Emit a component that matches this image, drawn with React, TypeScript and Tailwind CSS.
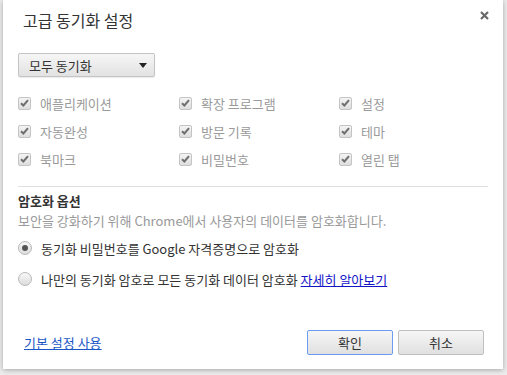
import React from "react";

const font = { fontFamily: '"Noto Sans CJK KR", "Noto Sans", sans-serif' };

function Check() {
  return (
    <span className="w-[13px] h-[13px] rounded-[2px] border border-[#c4c4c4] bg-gradient-to-b from-[#f4f4f4] to-[#dedede] flex items-center justify-center shrink-0">
      <svg width="9" height="8" viewBox="0 0 9 8">
        <path d="M1 4.2 L3.4 6.5 L8 1.2" fill="none" stroke="#6e6e6e" strokeWidth="2" />
      </svg>
    </span>
  );
}

function CheckItem({ label }: { label: string }) {
  return (
    <div className="flex items-center gap-[9px] h-[28px]">
      <Check />
      <span className="text-[13px] text-[#9a9a9a] leading-none">{label}</span>
    </div>
  );
}

function Radio({ checked }: { checked?: boolean }) {
  return (
    <span className="w-[14px] h-[14px] rounded-full border border-[#b8b8b8] bg-gradient-to-b from-[#f8f8f8] to-[#dcdcdc] flex items-center justify-center shrink-0">
      {checked && <span className="w-[6px] h-[6px] rounded-full bg-[#555]" />}
    </span>
  );
}

export default function App() {
  return (
    <div className="w-[507px] h-[375px] bg-[#ececec] overflow-hidden" style={font}>
      <div className="ml-[3px] w-[500px] h-[369px] bg-white shadow-[0_1px_5px_rgba(0,0,0,0.3)] relative flex flex-col px-[15px]">
        <button className="absolute right-[14px] top-[10px] w-[10px] h-[10px] flex items-center justify-center">
          <svg width="9" height="9" viewBox="0 0 9 9">
            <path d="M1 1 L8 8 M8 1 L1 8" stroke="#6a6a6a" strokeWidth="2.2" />
          </svg>
        </button>
        <div className="pt-[9px] pl-[5px] text-[16px] text-[#333] leading-[22px]">고급 동기화 설정</div>
        <div className="mt-[22px] w-[137px] h-[24px] border border-[#c4c4c4] rounded-[2px] bg-gradient-to-b from-[#f6f6f6] to-[#e2e2e2] shadow-[0_1px_1px_rgba(0,0,0,0.08)] flex items-center justify-between pl-[10px] pr-[7px]">
          <span className="text-[13px] text-[#333] leading-none">모두 동기화</span>
          <svg width="8" height="5" viewBox="0 0 8 5">
            <path d="M0 0 H8 L4 5 Z" fill="#222" />
          </svg>
        </div>
        <div className="mt-[12px] grid grid-cols-[161px_160px_1fr]">
          <CheckItem label="애플리케이션" />
          <CheckItem label="확장 프로그램" />
          <CheckItem label="설정" />
          <CheckItem label="자동완성" />
          <CheckItem label="방문 기록" />
          <CheckItem label="테마" />
          <CheckItem label="북마크" />
          <CheckItem label="비밀번호" />
          <CheckItem label="열린 탭" />
        </div>
        <div className="mt-[13px] h-px bg-[#e0e0e0] w-[470px]" />
        <div className="mt-[5px] text-[13px] font-bold text-[#333] leading-[18px]">암호화 옵션</div>
        <div className="mt-[2px] text-[13px] text-[#999] leading-[18px]">보안을 강화하기 위해 Chrome에서 사용자의 데이터를 암호화합니다.</div>
        <div className="mt-[9px] flex items-center gap-[9px] h-[18px]">
          <Radio checked />
          <span className="text-[13px] text-[#333] leading-none">동기화 비밀번호를 Google 자격증명으로 암호화</span>
        </div>
        <div className="mt-[13px] flex items-center gap-[9px] h-[18px]">
          <Radio />
          <span className="text-[13px] text-[#333] leading-none">
            나만의 동기화 암호로 모든 동기화 데이터 암호화{" "}
            <a className="text-[#1515c8] underline">자세히 알아보기</a>
          </span>
        </div>
        <div className="mt-auto mb-[14px] flex items-center justify-between">
          <a className="ml-[6px] text-[13px] text-[#1a56c7] underline leading-none">기본 설정 사용</a>
          <div className="flex gap-[5px] mr-[4px]">
            <button className="w-[86px] h-[25px] border border-[#6b9cf0] rounded-[2px] bg-gradient-to-b from-[#f6f6f6] to-[#e0e0e0] text-[13px] text-[#333]">확인</button>
            <button className="w-[86px] h-[25px] border border-[#c0c0c0] rounded-[2px] bg-gradient-to-b from-[#f6f6f6] to-[#e0e0e0] text-[13px] text-[#333]">취소</button>
          </div>
        </div>
      </div>
    </div>
  );
}
